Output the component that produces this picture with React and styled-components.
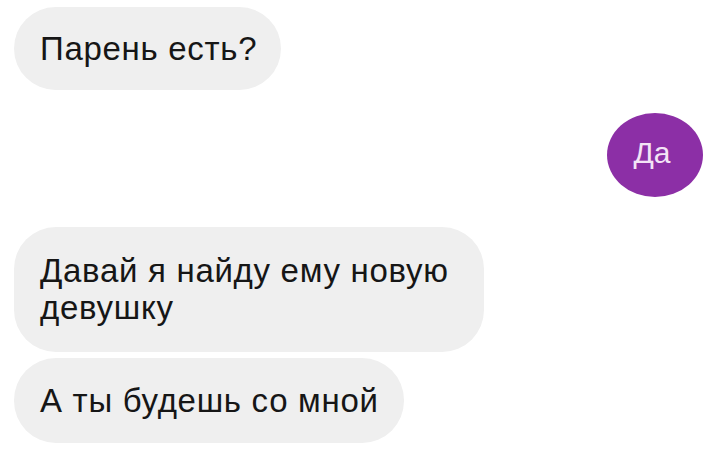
import styled, { createGlobalStyle } from "styled-components";

const GlobalStyle = createGlobalStyle`
  html, body {
    margin: 0;
    background: #ffffff;
  }
  body {
    font-family: "Liberation Sans", Arial, sans-serif;
  }
`;

function App() {
  return (
    <>
      <GlobalStyle />
      <Chat>
        <Bubble $height={83} $right={24}>Парень есть?</Bubble>
        <Mine>Да</Mine>
        <Group>
          <Bubble $wide>
            Давай я найду ему новую
            <br />
            девушку
          </Bubble>
          <Bubble $height={85} $right={25}>А ты будешь со мной</Bubble>
        </Group>
      </Chat>
    </>
  );
}

const Chat = styled.div`
  display: flex;
  flex-direction: column;
  align-items: flex-start;
  padding: 7px 17px 0 14px;
  width: 720px;
  height: 453px;
  box-sizing: border-box;
`;

const Group = styled.div`
  display: flex;
  flex-direction: column;
  align-items: flex-start;
  gap: 6px;
  margin-top: 30px;
`;

const Bubble = styled.div`
  display: flex;
  align-items: center;
  box-sizing: border-box;
  min-height: ${(p) => (p.$height ? `${p.$height}px` : "auto")};
  padding: ${(p) => (p.$wide ? "25px 35px 26px 26px" : `0 ${p.$right}px 0 26px`)};
  background: #efefef;
  border-radius: 42px;
  color: #161616;
  font-size: 33px;
  line-height: 37px;
  letter-spacing: 0.7px;
`;

const Mine = styled.div`
  align-self: flex-end;
  display: flex;
  align-items: center;
  justify-content: center;
  width: 96px;
  height: 84px;
  margin-top: 23px;
  border-radius: 50%;
  background: #8c2fa6;
  color: #f3e4f6;
  font-size: 30px;
  padding: 0 6px 4px 0;
  box-sizing: border-box;
`;

export default App;
